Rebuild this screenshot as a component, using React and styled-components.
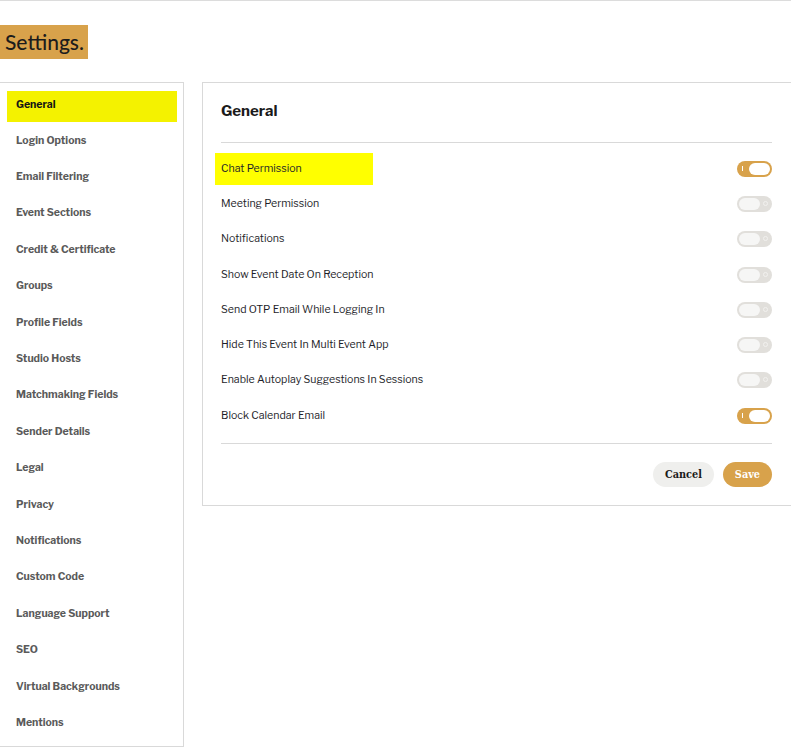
import React, { useState } from "react";
import styled, { createGlobalStyle } from "styled-components";

const GlobalStyle = createGlobalStyle`
  * { box-sizing: border-box; }
  body {
    margin: 0;
    background: #fff;
    font-family: "Libre Franklin", Roboto, "Open Sans", sans-serif;
    color: #1a1a1a;
  }
`;

const nav = [
  "General",
  "Login Options",
  "Email Filtering",
  "Event Sections",
  "Credit & Certificate",
  "Groups",
  "Profile Fields",
  "Studio Hosts",
  "Matchmaking Fields",
  "Sender Details",
  "Legal",
  "Privacy",
  "Notifications",
  "Custom Code",
  "Language Support",
  "SEO",
  "Virtual Backgrounds",
  "Mentions",
];

const settings = [
  { label: "Chat Permission", on: true, mark: true },
  { label: "Meeting Permission", on: false },
  { label: "Notifications", on: false },
  { label: "Show Event Date On Reception", on: false },
  { label: "Send OTP Email While Logging In", on: false },
  { label: "Hide This Event In Multi Event App", on: false },
  { label: "Enable Autoplay Suggestions In Sessions", on: false },
  { label: "Block Calendar Email", on: true },
];

function Toggle({ on, onClick }) {
  return (
    <ToggleStyled $on={on} onClick={onClick}>
      <span className="glyph" />
      <span className="knob" />
    </ToggleStyled>
  );
}

function App() {
  const [values, setValues] = useState(settings.map((s) => s.on));
  const flip = (i) =>
    setValues((v) => v.map((x, j) => (j === i ? !x : x)));

  return (
    <Page>
      <GlobalStyle />
      <Header>
        <Badge>Settings.</Badge>
      </Header>
      <Body>
        <Sidebar>
          {nav.map((item, i) => (
            <NavItem key={item} $active={i === 0}>
              {item}
            </NavItem>
          ))}
        </Sidebar>
        <Card>
          <CardTitle>General</CardTitle>
          <Rows>
            {settings.map((s, i) => (
              <Row key={s.label}>
                <Label $mark={s.mark}>{s.label}</Label>
                <Toggle on={values[i]} onClick={() => flip(i)} />
              </Row>
            ))}
          </Rows>
          <Footer>
            <Button>Cancel</Button>
            <Button $primary>Save</Button>
          </Footer>
        </Card>
      </Body>
    </Page>
  );
}

const Page = styled.div`
  border-top: 1px solid #dcdcdc;
  min-height: 749px;
`;

const Header = styled.div`
  padding-top: 24px;
  height: 81px;
`;

const Badge = styled.div`
  display: inline-block;
  background: #d8a24b;
  color: #1c1c1c;
  font-family: Lato, "Open Sans", sans-serif;
  font-size: 21px;
  font-weight: 500;
  line-height: 34px;
  padding: 0 4px 0 5px;
`;

const Body = styled.div`
  display: flex;
  align-items: flex-start;
  gap: 18px;
`;

const Sidebar = styled.nav`
  width: 184px;
  border: 1px solid #d9d9d9;
  border-left: none;
  padding: 8px 6px 5px 7px;
  display: flex;
  flex-direction: column;
`;

const NavItem = styled.div`
  display: flex;
  align-items: center;
  padding-left: 9px;
  font-size: 10.5px;
  font-weight: 700;
  color: ${(p) => (p.$active ? "#151515" : "#5a5a5a")};
  background: ${(p) => (p.$active ? "#f4f200" : "transparent")};
  height: ${(p) => (p.$active ? "31px" : "36.4px")};
  padding-bottom: ${(p) => (p.$active ? "5px" : "0")};
`;

const Card = styled.section`
  flex: 1;
  border: 1px solid #d9d9d9;
  border-right: none;
  padding: 0 19px 18px 18px;
`;

const CardTitle = styled.h2`
  margin: 0;
  padding: 18px 0 0 0;
  height: 60px;
  font-size: 15px;
  font-weight: 700;
  color: #1a1a1a;
  line-height: 20px;
  border-bottom: 1px solid #d9d9d9;
`;

const Rows = styled.div`
  padding: 8px 0 10px;
  border-bottom: 1px solid #d9d9d9;
`;

const Row = styled.div`
  display: flex;
  align-items: center;
  justify-content: space-between;
  height: 35.3px;
`;

const Label = styled.span`
  font-size: 10.6px;
  color: #1e1e2a;
  line-height: 32px;
  padding: 0 ${(p) => (p.$mark ? "71px" : "0")} 0 ${(p) => (p.$mark ? "6px" : "0")};
  margin-left: ${(p) => (p.$mark ? "-6px" : "0")};
  background: ${(p) => (p.$mark ? "#ffff00" : "transparent")};
`;

const ToggleStyled = styled.button`
  position: relative;
  width: 35px;
  height: 16px;
  border: none;
  padding: 0;
  border-radius: 8px;
  cursor: pointer;
  background: ${(p) => (p.$on ? "#d8a24b" : "#e1dfdb")};
  .knob {
    position: absolute;
    top: 2px;
    left: ${(p) => (p.$on ? "12px" : "2px")};
    width: 21px;
    height: 12px;
    border-radius: 6px;
    background: ${(p) => (p.$on ? "#ffffff" : "#f6f6f5")};
  }
  .glyph {
    position: absolute;
    top: 5px;
    ${(p) =>
      p.$on
        ? `left: 5px; width: 1px; height: 5px; background: #fff;`
        : `right: 4px; width: 5px; height: 5px; border-radius: 50%; border: 1px solid #f2f1ef;`}
  }
`;

const Footer = styled.div`
  display: flex;
  justify-content: flex-end;
  gap: 9px;
  padding-top: 18px;
`;

const Button = styled.button`
  height: 25px;
  border: none;
  border-radius: 13px;
  padding: 0 12px;
  font-family: "DejaVu Serif Condensed", "DejaVu Serif", "Liberation Serif", serif;
  font-size: 10.8px;
  font-weight: 700;
  cursor: pointer;
  background: ${(p) => (p.$primary ? "#d8a24b" : "#efefed")};
  color: ${(p) => (p.$primary ? "#ffffff" : "#1a1a1a")};
`;

export default App;
